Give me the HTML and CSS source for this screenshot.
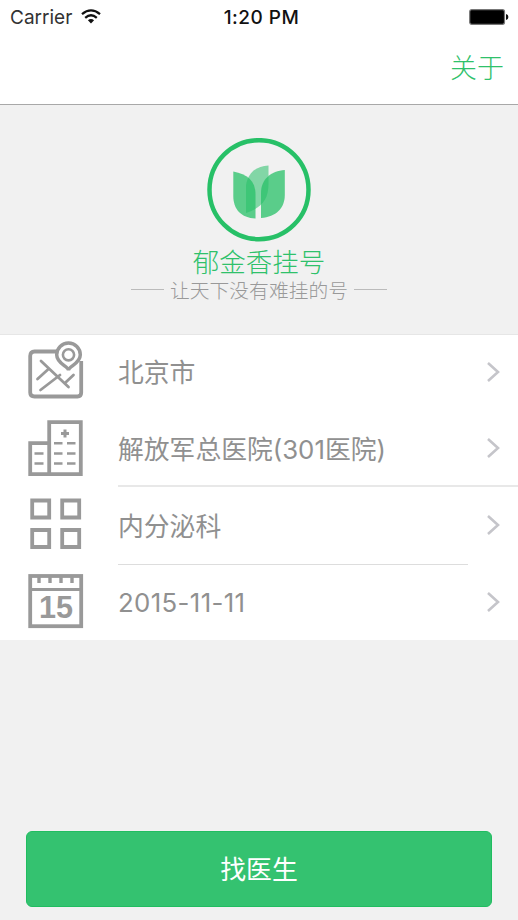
FILE: index.html
```html
<!DOCTYPE html>
<html lang="zh-CN">
<head>
<meta charset="utf-8">
<meta name="viewport" content="width=device-width, initial-scale=1">
<title>郁金香挂号</title>
<link rel="stylesheet" href="styles.css">
</head>
<body>
<div class="app">
  <header class="top">
    <div class="status">
      <div class="status-left">
        <span class="carrier">Carrier</span>
        <svg class="wifi" width="20" height="15" viewBox="0 0 20 15" fill="none" stroke="#111" stroke-width="2.3">
          <path d="M1 5.2Q10 -2.4 19 5.2"/>
          <path d="M4.2 8.8Q10 3.8 15.8 8.8"/>
          <path d="M6.9 11.2Q10 8.6 13.1 11.2L10 14.4Z" fill="#111" stroke="none"/>
        </svg>
      </div>
      <span class="time">1:20 PM</span>
      <svg class="battery" width="40" height="16" viewBox="0 0 40 16">
        <rect x=".7" y=".7" width="34.8" height="14.6" rx="2" fill="#000" stroke="#777" stroke-width="1.2"/>
        <path d="M37 5Q39.4 5.6 39.4 8T37 11Z" fill="#111"/>
      </svg>
    </div>
    <nav class="nav"><a class="about">关于</a></nav>
  </header>

  <section class="brand">
    <svg class="logo" width="104" height="104" viewBox="0 0 104 104">
      <circle cx="52" cy="51.7" r="49.5" fill="none" stroke="#27c067" stroke-width="4.5"/>
      <path d="M61.5 27.5V46C61.5 62 54 70 39 75V47C41 35 49 28 61.5 27.5Z" fill="#27c067" fill-opacity=".55"/>
      <path d="M26.3 33.5C40 36 48.5 43 48.5 56V80.5C34 80 26.3 71 26.3 58Z" fill="#27c067" fill-opacity=".75"/>
      <path d="M77.8 32C64 33 54 41 54 55V80C69 79 77.8 70 77.8 57Z" fill="#27c067" fill-opacity=".75"/>
    </svg>
    <h1 class="name">郁金香挂号</h1>
    <p class="slogan">让天下没有难挂的号</p>
  </section>

  <main class="list">
    <div class="row">
      <svg class="icon" width="58" height="64" viewBox="0 4 58 64" fill="none" stroke="#999" stroke-width="3.8">
        <path d="M30 14.5H7.5Q3.2 14.5 3.2 19V55.5Q3.2 59.5 7.5 59.5H50.5Q54.2 59.5 54.2 55.5V24"/>
        <path d="M14 24L41.5 50M21.5 32L10.5 42M33 38L13.5 53M46.5 38L38 46" stroke-width="2.8" stroke-linecap="round"/>
        <path d="M41.5 33C40.5 29 29.7 26.5 29.7 17.8A11.8 11.8 0 0 1 53.3 17.8C53.3 26.5 42.5 29 41.5 33Z" fill="#fff" stroke-width="3.5"/>
        <circle cx="41.5" cy="17.8" r="5.6" stroke-width="2.6"/>
      </svg>
      <span class="label">北京市</span>
      <svg class="chevron" width="16" height="24" viewBox="0 0 16 24"><path d="M2 3L12 12L2 21"/></svg>
    </div>
    <div class="row wide-line">
      <svg class="icon" width="58" height="64" viewBox="0 1 58 64" fill="none" stroke="#999" stroke-width="3.8">
        <path d="M22.2 58.2V6.2H53.8V58.2H3.2V27.2H22.2"/>
        <path d="M38 13.5V21.5M34 17.5H42" stroke-width="3"/>
        <path d="M27 27.3H35.5M40 27.3H48.5M27 37.5H35.5M40 37.5H48.5M27 47.5H35.5M40 47.5H48.5M7.5 37.5H16.5M7.5 47.5H16.5" stroke-width="2.4"/>
      </svg>
      <span class="label lower">解放军总医院(301医院)</span>
      <svg class="chevron" width="16" height="24" viewBox="0 0 16 24"><path d="M2 3L12 12L2 21"/></svg>
    </div>
    <div class="row short-line">
      <svg class="icon" width="58" height="64" viewBox="0 2 58 64" fill="none" stroke="#999" stroke-width="3.8">
        <path d="M5.2 8.5H22.2V25.5H5.2ZM35.2 8.5H52.2V25.5H35.2ZM5.2 38H22.2V55H5.2ZM35.2 38H52.2V55H35.2Z"/>
      </svg>
      <span class="label lower">内分泌科</span>
      <svg class="chevron" width="16" height="24" viewBox="0 0 16 24"><path d="M2 3L12 12L2 21"/></svg>
    </div>
    <div class="row">
      <svg class="icon" width="58" height="64" viewBox="0 2 58 64" fill="none" stroke="#999" stroke-width="3.8">
        <rect x="3.2" y="7" width="51" height="50.2"/>
        <path d="M3.2 20.5H53.8" stroke-width="2.8"/>
        <path d="M12 8V14M23 8V14M34 8V14M45 8V14" stroke-width="3.4"/>
        <text class="day" x="29" y="49" text-anchor="middle" textLength="34" lengthAdjust="spacingAndGlyphs">15</text>
      </svg>
      <span class="label date">2015-11-11</span>
      <svg class="chevron" width="16" height="24" viewBox="0 0 16 24"><path d="M2 3L12 12L2 21"/></svg>
    </div>
  </main>

  <footer class="action"><button class="find" type="button">找医生</button></footer>
</div>
</body>
</html>
```

FILE: styles.css
```css
* { box-sizing: border-box; }

body {
  margin: 0;
  background: #f1f1f1;
  font-family: Inter, "Noto Sans CJK SC", sans-serif;
}

.app {
  width: 518px;
  height: 920px;
  display: flex;
  flex-direction: column;
  overflow: hidden;
}

.top {
  height: 105px;
  background: #fff;
  border-bottom: 1px solid #a8a8a8;
}

.status {
  height: 34px;
  padding: 0 9px 0 10px;
  display: grid;
  grid-template-columns: 1fr auto 1fr;
  align-items: center;
  color: #111;
}

.status-left {
  display: flex;
  align-items: center;
  gap: 9px;
}

.carrier {
  width: 62px;
  padding-top: 1px;
  font-size: 19px;
  line-height: 33px;
  color: #333;
  white-space: nowrap;
}

.wifi { margin-bottom: 2px; }

.time {
  padding-top: 1px;
  font-size: 19px;
  font-weight: 500;
  line-height: 33px;
  letter-spacing: .5px;
  margin-left: 4px;
}

.battery { justify-self: end; }

.nav {
  height: 70px;
  padding-right: 14px;
  display: flex;
  justify-content: flex-end;
  align-items: center;
}

.about {
  color: #2fc16b;
  font-size: 27px;
  font-weight: 300;
  line-height: 40px;
}

.brand {
  height: 230px;
  padding-top: 33px;
  display: flex;
  flex-direction: column;
  align-items: center;
  border-bottom: 1px solid #e6e6e6;
}

.logo { display: block; }

.name {
  margin: 2px 0 0;
  color: #2fc16b;
  font-size: 26.5px;
  font-weight: 300;
  line-height: 36px;
}

.slogan {
  margin: -3px 0 0;
  display: flex;
  align-items: center;
  gap: 6px;
  color: #999;
  font-size: 19.8px;
  font-weight: 300;
  line-height: 28px;
}

.slogan::before,
.slogan::after {
  content: "";
  width: 33px;
  height: 1px;
  margin-bottom: 3px;
  background: #bbb;
}

.list {
  height: 305px;
  display: grid;
  grid-template-rows: 75px 77px 78px 75px;
  background: #fff;
}

.row {
  display: grid;
  grid-template-columns: 91px 1fr 16px;
  align-items: center;
  padding: 0 16px 0 27px;
}

.wide-line {
  background: linear-gradient(#e8e8e8, #e8e8e8) 118px 100% / 400px 2px no-repeat;
}

.short-line {
  background: linear-gradient(#ddd, #ddd) 118px 100% / 350px 1px no-repeat;
}

.label {
  color: #909090;
  font-size: 25.8px;
  font-weight: 400;
  line-height: 38px;
  white-space: nowrap;
}

.lower {
  padding-top: 2px;
}

.date {
  letter-spacing: .35px;
}

.chevron {
  margin-bottom: 2px;
}

.chevron path {
  fill: none;
  stroke: #c5c5ca;
  stroke-width: 2.6;
}

.day {
  fill: #999;
  stroke: none;
  font-family: "Liberation Sans", sans-serif;
  font-size: 31px;
  font-weight: 700;
}

.action {
  margin-top: auto;
  padding: 0 26px 13px;
}

.find {
  display: block;
  width: 100%;
  height: 76px;
  padding: 0 0 4px;
  border: 1px solid #20bd60;
  border-radius: 6px;
  background: #34c270;
  color: #fff;
  font-family: inherit;
  font-size: 25.8px;
}
```
